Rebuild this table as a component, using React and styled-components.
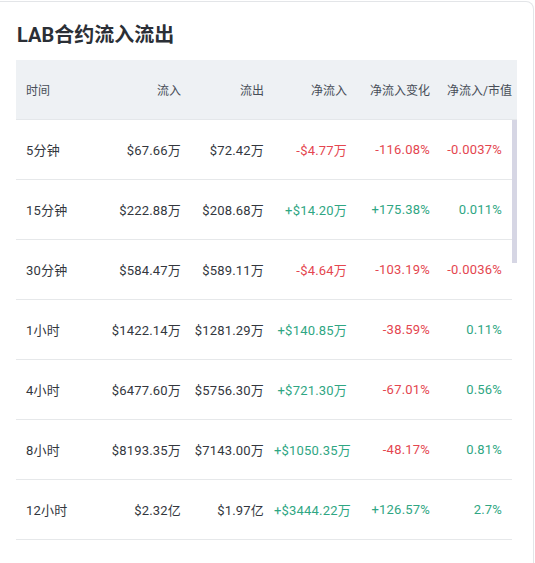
import styled, { createGlobalStyle } from 'styled-components';

const GlobalStyle = createGlobalStyle`
  body {
    margin: 0;
    background: #ffffff;
    font-family: Roboto, "Noto Sans CJK SC", sans-serif;
  }
`;

const rows = [
    { time: '5分钟', inflow: '$67.66万', outflow: '$72.42万', net: '-$4.77万', change: '-116.08%', ratio: '-0.0037%' },
    { time: '15分钟', inflow: '$222.88万', outflow: '$208.68万', net: '+$14.20万', change: '+175.38%', ratio: '0.011%' },
    { time: '30分钟', inflow: '$584.47万', outflow: '$589.11万', net: '-$4.64万', change: '-103.19%', ratio: '-0.0036%' },
    { time: '1小时', inflow: '$1422.14万', outflow: '$1281.29万', net: '+$140.85万', change: '-38.59%', ratio: '0.11%' },
    { time: '4小时', inflow: '$6477.60万', outflow: '$5756.30万', net: '+$721.30万', change: '-67.01%', ratio: '0.56%' },
    { time: '8小时', inflow: '$8193.35万', outflow: '$7143.00万', net: '+$1050.35万', change: '-48.17%', ratio: '0.81%' },
    { time: '12小时', inflow: '$2.32亿', outflow: '$1.97亿', net: '+$3444.22万', change: '+126.57%', ratio: '2.7%' },
];

const tone = (v) => (v.startsWith('-') ? 'down' : 'up');

function App() {
    return (
        <>
            <GlobalStyle />
            <Card>
                <Title>LAB合约流入流出</Title>
                <Table>
                    <HeadRow>
                        <HeadCell $left>时间</HeadCell>
                        <HeadCell>流入</HeadCell>
                        <HeadCell>流出</HeadCell>
                        <HeadCell>净流入</HeadCell>
                        <HeadCell>净流入变化</HeadCell>
                        <HeadCell $last>净流入/市值</HeadCell>
                    </HeadRow>
                    <Body>
                        {rows.map((r) => (
                            <Row key={r.time}>
                                <Cell $left>{r.time}</Cell>
                                <Cell>{r.inflow}</Cell>
                                <Cell>{r.outflow}</Cell>
                                <Cell $tone={tone(r.net)}>{r.net}</Cell>
                                <Cell $tone={tone(r.change)}>{r.change}</Cell>
                                <Cell $tone={tone(r.ratio)}>{r.ratio}</Cell>
                            </Row>
                        ))}
                        <Thumb />
                    </Body>
                </Table>
            </Card>
        </>
    );
}

const Card = styled.div`
    box-sizing: border-box;
    width: 534px;
    height: 580px;
    margin-top: 1px;
    padding: 19px 16px 0 16px;

    border: 1px solid #e3e5e8;
    border-left: none;
    border-radius: 0 8px 8px 0;
    background: #ffffff;
    overflow: hidden;
`;

const Title = styled.h2`
    margin: 0 0 11px 1px;
    font-size: 20px;
    line-height: 28px;
    font-weight: 700;
    color: #2b2f36;
`;

const Table = styled.div`
    width: 501px;
`;

const HeadRow = styled.div`
    display: grid;
    grid-template-columns: 92px 83px 83px 83px 83px 77px;
    height: 59px;
    align-items: center;
    background: #eef1f4;
    border-bottom: 1px solid #e4e7ea;
`;

const HeadCell = styled.div`
    padding: ${(p) => (p.$last ? '0 5px 0 0' : p.$left ? '0 0 0 10px' : '0 10px 0 0')};
    text-align: ${(p) => (p.$left ? 'left' : 'right')};
    font-size: 12px;
    color: #474d57;
    white-space: nowrap;
`;

const Body = styled.div`
    position: relative;
    padding-right: 5px;
`;

const Row = styled.div`
    display: grid;
    grid-template-columns: 92px 83px 83px 83px 83px 72px;
    height: 59px;
    align-items: center;
    border-bottom: 1px solid #e6e8ea;
`;

const Cell = styled.div`
    padding: ${(p) => (p.$left ? '0 0 0 10px' : '0 10px 0 0')};
    text-align: ${(p) => (p.$left ? 'left' : 'right')};
    font-size: 13px;
    letter-spacing: 0.2px;
    white-space: nowrap;
    color: ${(p) => (p.$tone === 'down' ? '#e4464f' : p.$tone === 'up' ? '#2fa683' : '#33373e')};
`;

const Thumb = styled.div`
    position: absolute;
    top: 0;
    right: 0;
    width: 5px;
    height: 143px;
    background: #d6d6e4;
`;

export default App;
